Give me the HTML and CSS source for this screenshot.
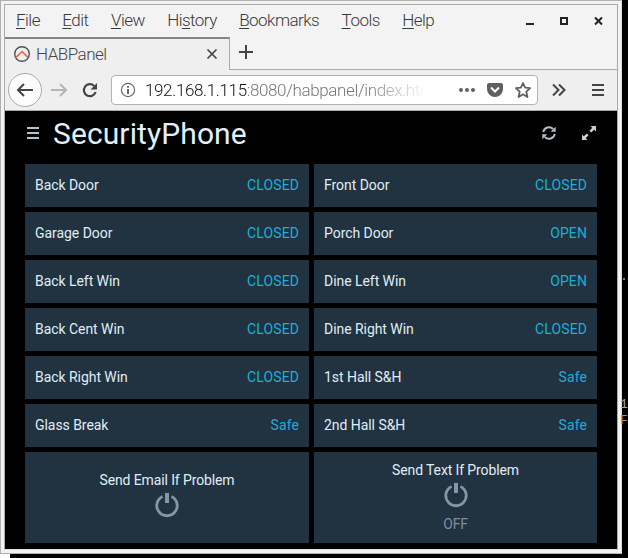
FILE: index.html
```html
<!DOCTYPE html>
<html lang="en">
<head>
<meta charset="utf-8">
<title>HABPanel</title>
<link rel="stylesheet" href="styles.css">
</head>
<body>
<div class="desktop">
<div class="window">
<div class="frame">
  <header class="menubar">
    <nav class="menus"><span><u>F</u>ile</span><span><u>E</u>dit</span><span><u>V</u>iew</span><span>Hi<u>s</u>tory</span><span><u>B</u>ookmarks</span><span><u>T</u>ools</span><span><u>H</u>elp</span></nav>
    <svg class="controls" width="78" height="12" viewBox="0 0 78 12"><path d="M0 10h8" stroke="#222" stroke-width="2"/><path d="M35 4h6v6h-6z" fill="none" stroke="#222" stroke-width="2"/><path d="M69 3.500l7 7M76 3.500l-7 7" stroke="#222" stroke-width="2"/></svg>
  </header>
  <div class="tabs">
    <div class="tab">
      <svg width="18" height="18" viewBox="0 0 18 18" fill="none"><circle cx="9" cy="9" r="7.300" stroke="#4d5357" stroke-width="1.400"/><path d="M3 12.300l6-5.800 6 5.800" stroke="#e8643c" stroke-width="1.600"/></svg>
      <span class="tab-title">HABPanel</span>
      <svg width="12" height="12" viewBox="0 0 12 12"><path d="M1.500 1.500l9 9M10.500 1.500l-9 9" stroke="#444" stroke-width="1.700"/></svg>
    </div>
    <div class="tab-rest"><svg width="14" height="14" viewBox="0 0 14 14"><path d="M7 0v14M0 7h14" stroke="#444" stroke-width="2"/></svg></div>
  </div>
  <div class="toolbar">
    <span class="back"><svg width="18" height="16" viewBox="0 0 18 16" fill="none" stroke="#444" stroke-width="2"><path d="M17 8H2M8 2L2 8l6 6"/></svg></span>
    <svg class="forward" width="18" height="16" viewBox="0 0 18 16" fill="none" stroke="#b4b4b4" stroke-width="2"><path d="M1 8h15M10 2l6 6-6 6"/></svg>
    <svg class="reload" width="16" height="16" viewBox="0 0 16 16" fill="none"><path d="M12.200 4A6 6 0 1 0 13.600 10" stroke="#444" stroke-width="2.200"/><path d="M15 1v6.500H8.500z" fill="#444"/></svg>
    <div class="url">
      <svg width="16" height="16" viewBox="0 0 16 16"><circle cx="8" cy="8" r="6.600" fill="none" stroke="#686868" stroke-width="1.200"/><path d="M8 7v5M8 4v1.800" stroke="#686868" stroke-width="2"/></svg>
      <div class="address"><b>192.168.1.115</b>:8080/habpanel/index.html</div>
      <svg class="url-actions" width="76" height="18" viewBox="0 0 76 18"><g fill="#606060"><circle cx="4" cy="9" r="2"/><circle cx="10" cy="9" r="2"/><circle cx="16" cy="9" r="2"/><path d="M32 2h12q2 0 2 2v4a8 8 0 0 1-16 0V4q0-2 2-2z"/></g><path d="M34 6.500l4 4 4-4" fill="none" stroke="#fff" stroke-width="2"/><path d="M66 2l2.100 4.700 5 .5-3.800 3.500 1.100 5.300-4.400-2.700-4.400 2.700 1.100-5.300-3.800-3.500 5-.5z" fill="none" stroke="#606060" stroke-width="1.800" stroke-linejoin="round"/></svg>
    </div>
    <svg class="more" width="14" height="14" viewBox="0 0 14 14" fill="none" stroke="#444" stroke-width="2"><path d="M1 1.500L6.500 7 1 12.500M7 1.500L12.500 7 7 12.500"/></svg>
    <span class="divider"></span>
    <svg class="hamb" width="12" height="12" viewBox="0 0 12 12"><path d="M0 1h12M0 6h12M0 11h12" stroke="#444" stroke-width="2"/></svg>
  </div>
  <main class="panel">
    <div class="panel-head">
      <svg class="menu-icon" width="12" height="12" viewBox="0 0 12 12"><path d="M0 1h12M0 6h12M0 11h12" stroke="#b7c3c8" stroke-width="2"/></svg>
      <h1>SecurityPhone</h1>
      <svg class="refresh" width="14" height="14" viewBox="0 0 14 14" fill="none"><path d="M1.200 6A5.900 5.900 0 0 1 11.200 3M12.800 8A5.900 5.900 0 0 1 2.800 11" stroke="#b4bfc3" stroke-width="1.900"/><path d="M13.700.7v5H8.700zM.3 13.300v-5h5z" fill="#b4bfc3"/></svg>
      <svg class="expand" width="14" height="14" viewBox="0 0 14 14"><path d="M8.500 0H14v5.500zM0 8.500V14h5.500z" fill="#c5d0d4"/><path d="M12 2L8.300 5.700M5.700 8.300L2 12" stroke="#c5d0d4" stroke-width="2.600"/></svg>
    </div>
    <div class="grid">
      <div class="cell"><span>Back Door</span><em>CLOSED</em></div><div class="cell"><span>Front Door</span><em>CLOSED</em></div>
      <div class="cell"><span>Garage Door</span><em>CLOSED</em></div><div class="cell"><span>Porch Door</span><em>OPEN</em></div>
      <div class="cell"><span>Back Left Win</span><em>CLOSED</em></div><div class="cell"><span>Dine Left Win</span><em>OPEN</em></div>
      <div class="cell"><span>Back Cent Win</span><em>CLOSED</em></div><div class="cell"><span>Dine Right Win</span><em>CLOSED</em></div>
      <div class="cell"><span>Back Right Win</span><em>CLOSED</em></div><div class="cell"><span>1st Hall S&amp;H</span><em>Safe</em></div>
      <div class="cell"><span>Glass Break</span><em>Safe</em></div><div class="cell"><span>2nd Hall S&amp;H</span><em>Safe</em></div>
      <div class="switch switch-plain"><span>Send Email If Problem</span><svg width="24" height="26" viewBox="0 0 24 26"><path d="M7.500 4.400A10.200 10.200 0 1 0 16.500 4.400" fill="none" stroke="#8298a6" stroke-width="2.800"/><path d="M12 1v10" stroke="#8298a6" stroke-width="4"/></svg></div>
      <div class="switch"><span>Send Text If Problem</span><svg width="24" height="26" viewBox="0 0 24 26"><path d="M7.500 4.400A10.200 10.200 0 1 0 16.500 4.400" fill="none" stroke="#8298a6" stroke-width="2.800"/><path d="M12 1v10" stroke="#8298a6" stroke-width="4"/></svg><small>OFF</small></div>
    </div>
  </main>
</div>
</div>
<aside class="terminal"><span class="t-dot">.</span><span class="t-one">1</span><span class="t-f">F</span></aside>
<div class="under"></div>
</div>
</body>
</html>
```
FILE: styles.css
```css
* { box-sizing: border-box; }
body { margin: 0; background: #000; font-family: Roboto, sans-serif; overflow: hidden; }
svg { display: block; flex: none; }
.desktop { width: 628px; height: 558px; display: grid; grid-template-columns: 622px 6px; grid-template-rows: 554px 4px; }
.window { border: 1px solid #b0b0b0; border-right-color: #ddd; background: #f3f3f3; padding: 3px; }
.frame { height: 546px; border: 1px solid #aaa; border-bottom-color: #ddd; background: #f3f3f3; }
.menubar { height: 32px; display: flex; justify-content: space-between; padding: 4px 13px 0 11px; }
.menus { display: flex; gap: 22.4px; font-size: 17px; font-weight: 300; line-height: 23px; letter-spacing: -0.52px; color: #383838; }
.menus u { text-underline-offset: 2px; text-decoration-thickness: 1px; }
.controls { margin-top: 5px; }
.tabs { height: 33px; display: flex; }
.tab { width: 225px; border-top: 2px solid #858585; border-right: 1px solid #aaa; background: #efefef; display: flex; align-items: center; padding: 0 11px 2px 8px; }
.tab-title { flex: 1; margin-left: 5px; font-size: 17px; font-weight: 300; letter-spacing: -0.5px; color: #444; }
.tab-rest { flex: 1; border-bottom: 1px solid #aaa; padding: 8px 0 0 9px; }
.toolbar { height: 41px; background: #efefef; border-bottom: 1px solid #aaa; display: flex; align-items: center; padding: 0 13px 1px 3px; }
.back { width: 34px; height: 34px; border: 1px solid #aaa; border-radius: 50%; background: #fcfcfc; display: flex; align-items: center; justify-content: center; flex: none; }
.forward { margin-left: 8px; }
.reload { margin-left: 14px; }
.url { width: 427px; height: 30px; margin-left: 13px; flex: none; border: 1px solid #b2b2b2; border-radius: 4px; background: #fff; display: flex; align-items: center; padding: 0 4px 0 8px; }
.address { width: 279px; margin-left: 9px; margin-right: 35px; overflow: hidden; white-space: nowrap; font-size: 17px; font-weight: 300; letter-spacing: -0.37px; color: #777; -webkit-mask-image: linear-gradient(to right, #000 220px, transparent 282px); mask-image: linear-gradient(to right, #000 220px, transparent 282px); }
.address b { font-weight: 300; color: #111; }
.more { margin-left: 14px; }
.divider { width: 1px; height: 34px; background: #d4d4d4; margin-left: 12px; }
.hamb { margin-left: 14px; }
.panel { height: 438px; background: #000; padding: 0 20px; }
.panel-head { height: 53px; display: flex; align-items: center; padding: 0 1px 8px 2px; }
.panel-head h1 { flex: 1; margin: 0 0 0 14px; font-size: 30px; font-weight: 400; line-height: 40px; letter-spacing: 0.1px; color: #e2f0fa; }
.menu-icon, .refresh, .expand { margin-bottom: 2px; }
.refresh { margin-right: 26px; }
.grid { display: grid; grid-template-columns: 284px 283px; grid-template-rows: repeat(6, 43px) 91px; gap: 5px; font-size: 14px; letter-spacing: -0.05px; color: #e0edf5; }
.cell, .switch { background: #213240; }
.cell { display: flex; align-items: center; justify-content: space-between; padding: 0 10px 2px; }
.cell em { font-style: normal; letter-spacing: 0.1px; color: #19b0d8; }
.switch { display: flex; flex-direction: column; align-items: center; padding-top: 8px; line-height: 20px; letter-spacing: -0.12px; }
.switch svg { margin-top: 2px; }
.switch-plain { padding-top: 18px; }
.switch small { font-size: 14px; line-height: 20px; margin-top: 6px; color: #7c909d; }
.terminal { background: #000; color: #aaa; display: flex; flex-direction: column; font: 13px/16px "Liberation Mono", monospace; }
.terminal span { margin-left: -2px; }
.t-dot { margin-top: 269px; }
.t-one { margin-top: 112px; }
.t-f { color: #b08a68; }
.under { grid-column: 1 / -1; background: linear-gradient(to right, #fff 10px, #000 10px); }
```
